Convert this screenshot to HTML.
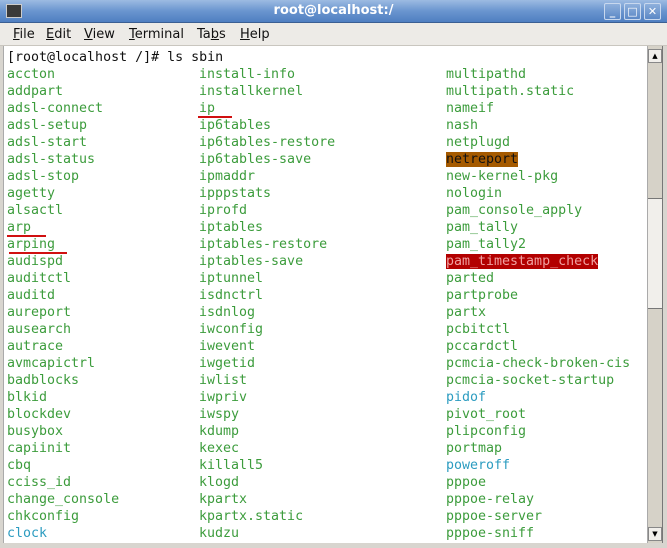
<!DOCTYPE html>
<html><head><meta charset="utf-8"><style>
*{margin:0;padding:0;box-sizing:border-box}
body{width:667px;height:548px;overflow:hidden;background:#d8d5cf;position:relative;font-family:"DejaVu Sans","Liberation Sans",sans-serif}
#title{position:absolute;left:0;top:0;width:667px;height:23px;background:linear-gradient(#9dbbe2,#6a95cf 50%,#4f7fc1);border-bottom:1px solid #3b5f93}
#title .t{position:absolute;left:0;width:667px;text-align:center;top:3px;color:#fff;font-weight:bold;font-size:13px}
#icon{position:absolute;left:6px;top:4px;width:16px;height:14px;background:#3a3a3a;border:1px solid #ccc}
.wb{position:absolute;top:3px;width:17px;height:17px;border:1px solid #c8d8ee;border-radius:2px;background:linear-gradient(#8fb0dc,#5b88c6);color:#fff;font-size:11px;text-align:center;line-height:15px;font-weight:bold}
#menu{position:absolute;left:0;top:23px;width:667px;height:23px;background:#edebe7;border-bottom:1px solid #c9c6bf;font-size:13px;color:#111}
#menu span{position:absolute;top:4px}
#menu u{text-decoration:underline}
#term{position:absolute;left:3px;top:46px;width:644px;height:497px;background:#fff;border-left:1px solid #aaa}
#sb{position:absolute;left:647px;top:46px;width:16px;height:497px;background:#d6d2c8;border-left:1px solid #aaa;border-right:1px solid #777}
#thumb{position:absolute;left:0;top:152px;width:14px;height:111px;background:#f1efeb;border-top:1px solid #777;border-bottom:1px solid #777}
.arr{position:absolute;left:0;width:14px;height:14px;background:#f1efeb;border:1px solid #888;font-size:7px;text-align:center;line-height:13px;color:#000}
.col{position:absolute;top:49px;font-family:"DejaVu Sans Mono","Liberation Mono",monospace;font-size:13.3px;line-height:17px;color:#3c9c3c;white-space:pre}
.c{color:#2c9cc0}
.k{color:#111}
.hn{background:#a55a00;color:#111}
.hp{background:#b30000;color:#f0a0a0}
.ul{position:absolute;height:2px;background:#d01010}
</style></head><body>
<div id="title"><div id="icon"></div><div class="t">root@localhost:/</div>
<div class="wb" style="left:604px">_</div><div class="wb" style="left:624px">□</div><div class="wb" style="left:644px">✕</div></div>
<div id="menu"><span style="left:13px"><u>F</u>ile</span><span style="left:46px"><u>E</u>dit</span><span style="left:84px"><u>V</u>iew</span><span style="left:129px"><u>T</u>erminal</span><span style="left:197px">Ta<u>b</u>s</span><span style="left:240px"><u>H</u>elp</span></div>
<div id="term"></div>
<div id="sb"><div class="arr" style="top:3px">▲</div><div id="thumb"></div><div class="arr" style="top:481px">▼</div></div>
<div class="col" style="left:7px"><span class="k">[root@localhost /]# ls sbin</span>
accton
addpart
adsl-connect
adsl-setup
adsl-start
adsl-status
adsl-stop
agetty
alsactl
arp
arping
audispd
auditctl
auditd
aureport
ausearch
autrace
avmcapictrl
badblocks
blkid
blockdev
busybox
capiinit
cbq
cciss_id
change_console
chkconfig
<span class="c">clock</span></div>
<div class="col" style="left:199px"> 
install-info
installkernel
ip
ip6tables
ip6tables-restore
ip6tables-save
ipmaddr
ipppstats
iprofd
iptables
iptables-restore
iptables-save
iptunnel
isdnctrl
isdnlog
iwconfig
iwevent
iwgetid
iwlist
iwpriv
iwspy
kdump
kexec
killall5
klogd
kpartx
kpartx.static
kudzu</div>
<div class="col" style="left:446px"> 
multipathd
multipath.static
nameif
nash
netplugd
<span class="hn">netreport</span>
new-kernel-pkg
nologin
pam_console_apply
pam_tally
pam_tally2
<span class="hp">pam_timestamp_check</span>
parted
partprobe
partx
pcbitctl
pccardctl
pcmcia-check-broken-cis
pcmcia-socket-startup
<span class="c">pidof</span>
pivot_root
plipconfig
portmap
<span class="c">poweroff</span>
pppoe
pppoe-relay
pppoe-server
pppoe-sniff</div>
<div class="ul" style="left:198px;top:116px;width:34px"></div>
<div class="ul" style="left:7px;top:235px;width:39px"></div>
<div class="ul" style="left:9px;top:252px;width:58px"></div>
</body></html>
